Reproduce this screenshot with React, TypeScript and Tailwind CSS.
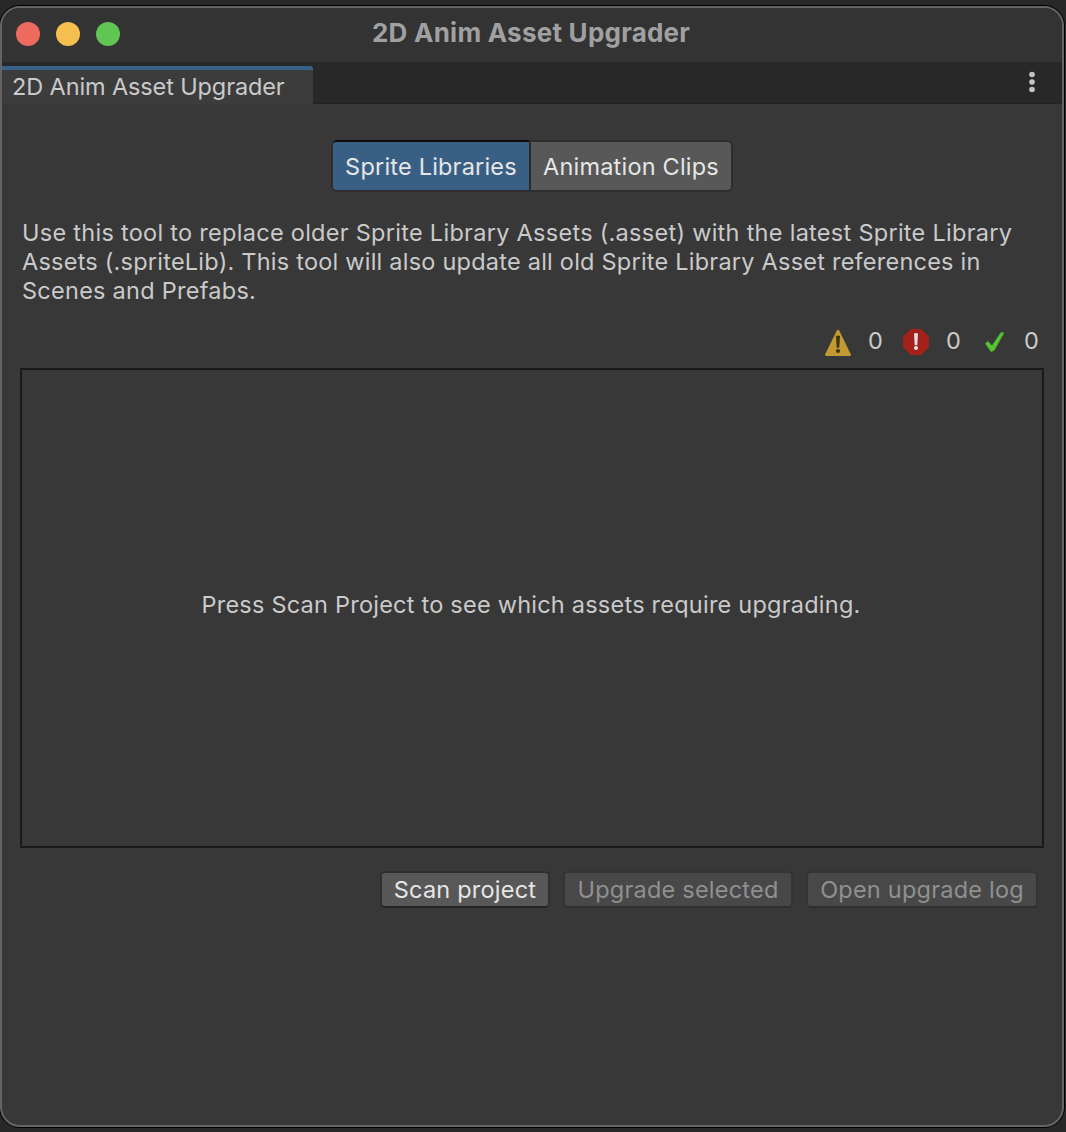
import React from "react";

function WarningIcon() {
  return (
    <svg width="28" height="28" viewBox="0 0 28 28" className="shrink-0">
      <path d="M15.200 2.500 26.8 26.2Q27.3 28 25.8 28H2.2Q.7 28 1.2 26.2L12.800 2.500Q14 .9 15.200 2.500Z" fill="#c39a31" />
      <path d="M12 8Q14 7 16 8L15.3 19.800H12.7Z" fill="#3f3316" />
      <circle cx="14" cy="23" r="2.1" fill="#3f3316" />
    </svg>
  );
}

function ErrorIcon() {
  return (
    <svg width="28" height="28" viewBox="0 0 28 28" className="shrink-0">
      <path d="M8.8 1h10.4L27 8.8v10.4L19.2 27H8.8L1 19.2V8.8Z" fill="#a3211b" />
      <path d="M12 5.5Q14 4.5 16 5.5L15.3 17.2H12.7Z" fill="#e2dede" />
      <circle cx="14" cy="20" r="2.1" fill="#e2dede" />
    </svg>
  );
}

function CheckIcon() {
  return (
    <svg width="28" height="28" viewBox="0 0 28 28" className="shrink-0">
      <path d="M5.500 15.5 8 13.500 12 18 21 4.500 23.800 5 14 22.500 11 23.500Z" fill="#56c632" stroke="#48a92c" strokeWidth="1" strokeLinejoin="round" />
    </svg>
  );
}

export default function App() {
  return (
    <div className="h-[1132px] w-[1066px] overflow-hidden bg-[#282828] pt-[6px] font-['Inter',sans-serif] text-[23.5px] text-[#cacaca]">
      <div className="flex h-[1121px] w-[1064px] flex-col overflow-hidden rounded-[20px] border-2 border-[#646464] bg-[#383838] shadow-[0_0_0_1px_#000]">
        <header className="grid h-[54px] shrink-0 grid-cols-[1fr_auto_1fr] items-center bg-[#333333] pb-[2px] pl-[14px]">
          <div className="flex gap-4">
            <span className="size-6 rounded-full bg-[#ed6a5e]" />
            <span className="size-6 rounded-full bg-[#f5bf4f]" />
            <span className="size-6 rounded-full bg-[#61c554]" />
          </div>
          <h1 className="-mt-[2px] -ml-[15px] w-[319px] text-[26px] leading-8 font-bold tracking-[0.24px] whitespace-nowrap text-[#a0a0a0]">2D Anim Asset Upgrader</h1>
        </header>
        <nav className="flex h-[42px] shrink-0 items-end justify-between border-b border-[#232323] bg-[#282828] pr-[27px]">
          <div className="-mb-px flex h-[38px] w-[311px] items-center rounded-tr-[3px] border-t-4 border-[#3a6187] bg-[#3c3c3c] pl-[10px] tracking-[-0.12px] whitespace-nowrap">
            2D Anim Asset Upgrader
          </div>
          <svg width="6" height="22" viewBox="0 0 6 22" fill="#c4c4c4" className="mb-[10px]">
            <circle cx="3" cy="3.500" r="2.800" />
            <circle cx="3" cy="11" r="2.800" />
            <circle cx="3" cy="18.500" r="2.800" />
          </svg>
        </nav>
        <main className="flex flex-col px-[18px]">
          <div className="mt-9 ml-[311px] flex h-[52px] w-[402px] rounded-md border-2 border-[#2e2e2e] bg-[#2a2a2a] text-[#e6e6e6]">
            <button className="-mt-[2px] w-[196px] rounded-l-[4px] border-t-2 border-[#0d0d0d] bg-[#3a5f85] pt-px tracking-[0.2px]">Sprite Libraries</button>
            <button className="ml-[2px] w-[200px] rounded-r-[4px] bg-[#585858] pt-px tracking-[0.2px]">Animation Clips</button>
          </div>
          <p className="mt-[26px] ml-[2px] h-[88px] leading-[29px] whitespace-nowrap">
            <span className="block tracking-[0.28px]">Use this tool to replace older Sprite Library Assets (.asset) with the latest Sprite Library</span>
            <span className="block tracking-[0.23px]">Assets (.spriteLib). This tool will also update all old Sprite Library Asset references in</span>
            <span className="block tracking-[0.26px]">Scenes and Prefabs.</span>
          </p>
          <div className="mt-[22px] flex h-[28px] items-center justify-end pr-[4px]">
            <WarningIcon />
            <span className="mr-[18px] mb-[2px] ml-[16px] w-4">0</span>
            <ErrorIcon />
            <span className="mr-[18px] mb-[2px] ml-[16px] w-4">0</span>
            <CheckIcon />
            <span className="mb-[2px] ml-[16px] w-4">0</span>
          </div>
          <section className="mt-3 flex h-[480px] w-[1024px] items-center justify-center border-2 border-[#1a1a1a] pr-[2px] pb-[7px] tracking-[0.23px]">
            Press Scan Project to see which assets require upgrading.
          </section>
          <div className="mt-[23px] ml-[360px] flex gap-[13px] leading-[31px] tracking-[0.22px] whitespace-nowrap">
            <button className="h-[37px] w-[170px] rounded-[5px] border-2 border-[#303030] border-b-[#242424] bg-[#585858] text-[#e6e6e6]">Scan project</button>
            <button className="h-[37px] w-[230px] rounded-[5px] border-2 border-[#343434] border-b-[#2e2e2e] bg-[#484848] text-[#909090]">Upgrade selected</button>
            <button className="h-[37px] w-[232px] rounded-[5px] border-2 border-[#343434] border-b-[#2e2e2e] bg-[#484848] text-[#909090]">Open upgrade log</button>
          </div>
        </main>
      </div>
    </div>
  );
}
